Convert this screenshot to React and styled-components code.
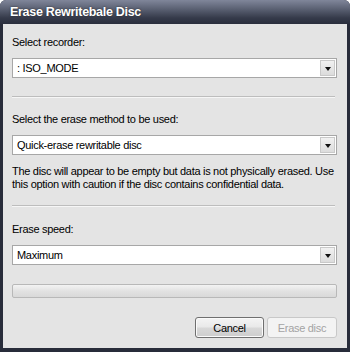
import React from 'react';
import styled, { createGlobalStyle } from 'styled-components';

const GlobalStyle = createGlobalStyle`
  html, body {
    margin: 0;
    padding: 0;
    background: #ffffff;
  }
  body {
    font-family: "Liberation Sans", Arial, sans-serif;
  }
`;

const Window = styled.div`
  width: 350px;
  height: 352px;
  box-sizing: border-box;
  display: flex;
  flex-direction: column;
  background: #282c3a;
  border-radius: 6px 6px 0 0;
  overflow: hidden;
`;

const TitleBar = styled.div`
  height: 24px;
  flex: none;
  display: flex;
  align-items: center;
  padding-left: 10px;
  background: linear-gradient(to bottom, #80869a 0%, #585e70 40%, #353a4a 75%, #2a2e3d 100%);
  color: #ffffff;
  font-family: "Liberation Sans", Arial, sans-serif;
  font-weight: bold;
  font-size: 12.5px;
  letter-spacing: -0.3px;
  text-shadow: 0 0 2px rgba(0, 0, 0, 0.6);
`;

const Body = styled.div`
  flex: 1;
  margin: 0 3px 4px 3px;
  background: #e4e4e4;
  padding: 10px 10px 0 9px;
  display: flex;
  flex-direction: column;
  font-family: "Liberation Sans", Arial, sans-serif;
  font-size: 11px;
  letter-spacing: -0.3px;
  color: #000000;
`;

const Label = styled.div`
  line-height: 14px;
  height: 14px;
  margin-top: ${({ top }) => top}px;
`;

const Select = styled.div`
  margin-top: 9px;
  height: 20px;
  box-sizing: border-box;
  border: 1px solid #a7a7a7;
  background: #ffffff;
  display: flex;
  align-items: stretch;
`;

const SelectValue = styled.div`
  flex: 1;
  padding-left: 4px;
  display: flex;
  align-items: center;
`;

const DropButton = styled.div`
  width: 15px;
  margin: 1px;
  box-sizing: border-box;
  border: 1px solid #c9c9c9;
  background: linear-gradient(to bottom, #f1f1f1, #dcdcdc);
  display: flex;
  align-items: center;
  justify-content: center;
`;

const Arrow = styled.div`
  width: 0;
  height: 0;
  border-left: 3.5px solid transparent;
  border-right: 3.5px solid transparent;
  border-top: 4px solid #111111;
  margin-top: 1px;
`;

const Separator = styled.div`
  margin-top: ${({ top }) => top}px;
  margin-right: 2px;
  height: 1px;
  background: #bdbdbd;
  border-bottom: 1px solid #f6f6f6;
`;

const Description = styled.p`
  margin: 10px 0 0 0;
  line-height: 13px;
  white-space: nowrap;
`;

const Progress = styled.div`
  margin-top: 19px;
  height: 14px;
  box-sizing: border-box;
  border: 1px solid #b8b8b8;
  border-radius: 2px;
  background: linear-gradient(to bottom, #f3f3f3, #e2e2e2 50%, #d9d9d9);
`;

const Buttons = styled.div`
  margin-top: 19px;
  display: flex;
  justify-content: flex-end;
  gap: 3px;
`;

const Button = styled.button`
  height: 21px;
  width: ${({ width }) => width}px;
  box-sizing: border-box;
  border-radius: 3px;
  font-family: "Liberation Sans", Arial, sans-serif;
  font-size: 11px;
  letter-spacing: -0.3px;
  padding: 0;
  border: 1px solid ${({ disabled }) => (disabled ? '#c8c8c8' : '#6f6f6f')};
  color: ${({ disabled }) => (disabled ? '#a3a3a3' : '#000000')};
  background: ${({ disabled }) =>
    disabled
      ? '#f3f3f3'
      : 'linear-gradient(to bottom, #f4f4f4 0%, #e9e9e9 48%, #d8d8d8 52%, #cdcdcd 100%)'};
  box-shadow: ${({ disabled }) => (disabled ? 'none' : 'inset 0 0 0 1px #fafafa')};
`;

const Dropdown = ({ value }) => (
  <Select>
    <SelectValue>{value}</SelectValue>
    <DropButton>
      <Arrow />
    </DropButton>
  </Select>
);

const App = () => (
  <>
    <GlobalStyle />
    <Window>
      <TitleBar>Erase Rewritebale Disc</TitleBar>
      <Body>
        <Label top={1}>Select recorder:</Label>
        <Dropdown value=": ISO_MODE" />
        <Separator top={18} />
        <Label top={14}>Select the erase method to be used:</Label>
        <Dropdown value="Quick-erase rewritable disc" />
        <Description>
          The disc will appear to be empty but data is not physically erased. Use
          <br />
          this option with caution if the disc contains confidential data.
        </Description>
        <Separator top={14} />
        <Label top={15}>Erase speed:</Label>
        <Dropdown value="Maximum" />
        <Progress />
        <Buttons>
          <Button width={69}>Cancel</Button>
          <Button width={70} disabled>
            Erase disc
          </Button>
        </Buttons>
      </Body>
    </Window>
  </>
);

export default App;
